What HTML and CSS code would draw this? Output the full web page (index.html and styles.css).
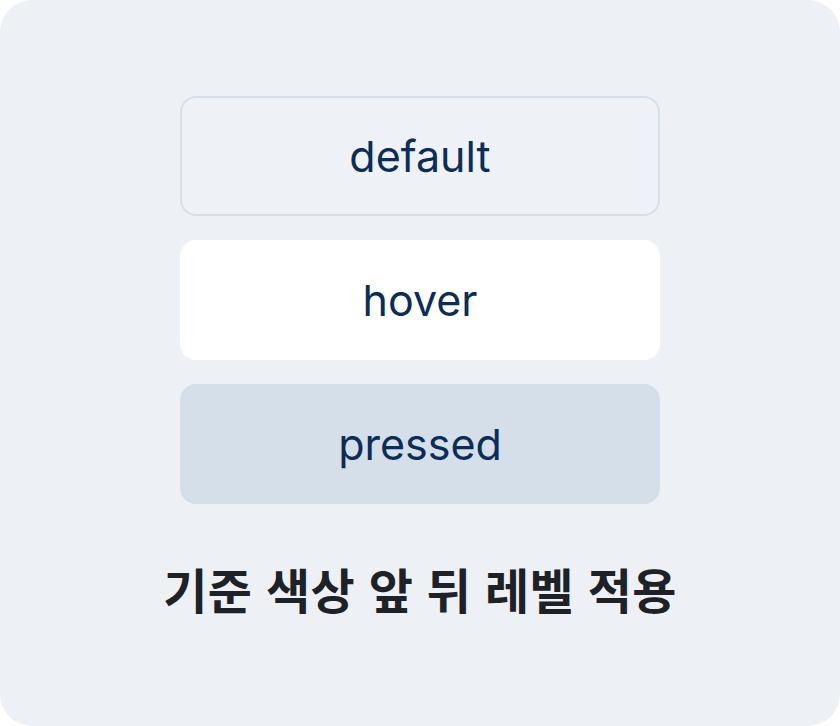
FILE: index.html
```html
<!DOCTYPE html>
<html lang="ko">
<head>
<meta charset="utf-8">
<link rel="stylesheet" href="styles.css">
</head>
<body>
<div class="card">
  <div class="stack">
    <div class="btn btn-default">default</div>
    <div class="btn btn-hover">hover</div>
    <div class="btn btn-pressed">pressed</div>
  </div>
  <div class="title">기준 색상 앞 뒤 레벨 적용</div>
</div>
</body>
</html>
```
FILE: styles.css
```css
html, body {
  margin: 0;
  padding: 0;
  background: #ffffff;
}
.card {
  width: 840px;
  height: 726px;
  box-sizing: border-box;
  background: #edf1f6;
  border-radius: 32px;
  padding-top: 96px;
  display: flex;
  flex-direction: column;
  align-items: center;
}
.stack {
  display: flex;
  flex-direction: column;
  gap: 24px;
  width: 480px;
}
.btn {
  height: 120px;
  box-sizing: border-box;
  border-radius: 16px;
  display: flex;
  align-items: center;
  justify-content: center;
  font-family: Inter, "Noto Sans", sans-serif;
  font-size: 43px;
  color: #0c2d57;
}
.btn-default {
  border: 2px solid #d5dfe9;
  background: #eef2f7;
}
.btn-hover {
  background: #ffffff;
}
.btn-pressed {
  background: #d5dfe9;
}
.title {
  margin-top: 56px;
  font-family: "Noto Sans CJK KR", sans-serif;
  font-weight: 700;
  font-size: 48px;
  line-height: 56px;
  letter-spacing: 0.3px;
  color: #1e2226;
}
```
